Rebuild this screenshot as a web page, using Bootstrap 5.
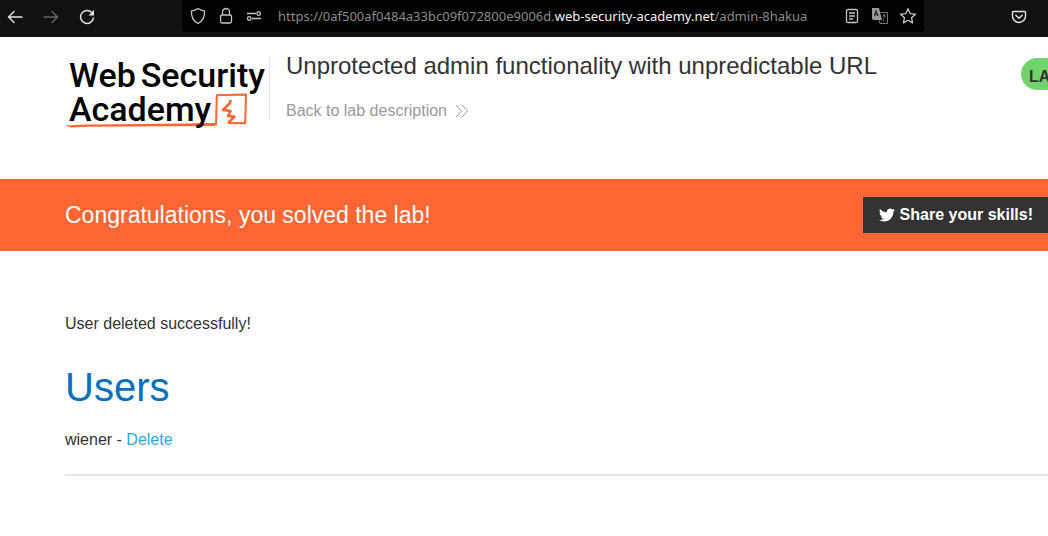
<!DOCTYPE html>
<html lang="en">
<head>
<meta charset="utf-8">
<meta name="viewport" content="width=device-width, initial-scale=1">
<title>Unprotected admin functionality with unpredictable URL</title>
<link href="https://cdn.jsdelivr.net/npm/bootstrap@5.3.0/dist/css/bootstrap.min.css" rel="stylesheet">
<style>
  body { font-family: "Liberation Sans", Arial, sans-serif; font-size: 16px; line-height: 24px; color: #333332; background: #fff; }
  .chrome-bar { height: 37px; background: #111; color: #e4e4e4; padding-left: 6px; }
  .chrome-bar svg, .site-header svg, .share-btn svg { display: block; fill: none; stroke: currentColor; flex: none; }
  .chrome-bar button { padding: 0; border: 0; background: none; color: inherit; }
  .chrome-bar .forward-btn { color: #666; }
  .nav-tools { flex: none; width: 176px; gap: 18px; height: 33px; }
  .address { min-width: 0; height: 32px; background: #000; border-radius: 0 0 4px 4px; padding: 0 7px 0 8px; gap: 10px; color: #c4c4c4; }
  .address-text { font: 13px/20px "Noto Sans", sans-serif; color: #8b8b8b; white-space: nowrap; padding-left: 6px; }
  .address-text b { font-weight: 400; color: #f4f4f4; }
  .chrome-end { flex: none; width: 124px; height: 33px; padding-right: 21px; }
  .page-inset { padding-left: 65px; }
  .site-header { height: 142px; padding-top: 21px; }
  .logo { flex: none; width: 205px; height: 62px; border-right: 1px solid #e4e4e4; color: #000; position: relative; }
  .logo-line { position: relative; z-index: 1; font: 500 34px/34px Roboto, sans-serif; white-space: nowrap; gap: 5px; padding-left: 4px; }
  .logo-art { position: absolute; left: 0; top: 34px; color: #ff6633; }
  .lab-title { padding-left: 16px; }
  .lab-title h2 { font-size: 24px; line-height: 28px; margin: -6px 0 19px; font-weight: 400; }
  .back-link { color: #999; gap: 8px; }
  .lab-pill { flex: none; width: 27px; height: 32px; background: #70d46c; font-weight: 700; line-height: 38px; padding-left: 8px; }
  .solved-band { height: 72px; background: #ff6633; color: #fff; }
  .solved-band h4 { font-size: 23px; line-height: 28px; font-weight: 400; }
  .share-btn { height: 36px; border: 0; background: #333332; color: #fff; font-weight: 700; padding: 0 15px 0 16px; gap: 5px; }
  .main-area { padding-top: 61px; }
  .users-title { font-size: 40px; line-height: 48px; font-weight: 400; color: #0071bd; margin: 27px 0 17px; }
  .delete-link { color: #29abe2; }
  .rule { height: 2px; background: #e4e4e4; border: 0; opacity: 1; margin: 22px 0 0; }
</style>
</head>
<body>
<nav class="chrome-bar d-flex align-items-start" aria-label="Browser">
  <div class="nav-tools d-flex align-items-center">
    <button type="button" aria-label="Back"><svg width="18" height="18" viewBox="0 0 18 18" stroke-width="1.4" stroke-linecap="round" stroke-linejoin="round"><path d="M16 9H2.500M8 3.500 2.500 9 8 14.500"/></svg></button>
    <button type="button" class="forward-btn" aria-label="Forward"><svg width="18" height="18" viewBox="0 0 18 18" stroke-width="1.400" stroke-linecap="round" stroke-linejoin="round"><path d="M2 9h13.500M10 3.500 15.500 9 10 14.500"/></svg></button>
    <button type="button" aria-label="Reload"><svg width="18" height="18" viewBox="0 0 18 18" stroke-width="1.500"><path d="M13.800 4.500A6.500 6.500 0 1 0 15.500 9.500"/><path d="M16 2v5.500h-5.500z" fill="currentColor" stroke="none"/></svg></button>
  </div>
  <div class="address d-flex align-items-center flex-grow-1">
    <svg width="16" height="18" viewBox="0 0 16 18" stroke-width="1.300" stroke-linejoin="round"><path d="M8 1.500C6 3 3.500 3.700 1.500 3.800c-.4 5.700 1.600 10.200 6.500 12.700 4.900-2.500 6.900-7 6.500-12.700C12.500 3.700 10 3 8 1.500z"/></svg>
    <svg width="20" height="18" viewBox="0 0 20 18" stroke-width="1.300"><rect x="4.500" y="8" width="11" height="8" rx="1.500"/><path d="M6.500 8V5a3.500 3.500 0 0 1 7 0v3"/></svg>
    <svg width="16" height="16" viewBox="0 0 16 16" stroke-width="1.300"><path d="M1 5.500h9M6 10.500h9"/><circle cx="12.700" cy="5.500" r="1.800"/><circle cx="3.300" cy="10.500" r="1.800"/></svg>
    <div class="address-text flex-grow-1">https://0af500af0484a33bc09f072800e9006d.<b>web-security-academy.net</b>/admin-8hakua</div>
    <button type="button" aria-label="Reader view"><svg width="18" height="18" viewBox="0 0 18 18" stroke-width="1.300"><rect x="3.500" y="2.500" width="11" height="13" rx="1.500"/><path d="M6 6h6M6 9h6M6 12h4"/></svg></button>
    <button type="button" aria-label="Translate"><svg width="18" height="18" viewBox="0 0 18 18"><path d="M1 1h7l3 12H2.500L1 11.500z" fill="#999" stroke="none"/><path d="M9.500 5.500h7v11H9L8 13" stroke="#777"/><path d="m3.500 9 1.500-5 2 5M4 7.500h2.500" stroke="#222" stroke-width="1.200"/><path d="M11.500 9q1.500-2 2.500-.5c.5 1.500-1.500 1.500-1.500 3M12.500 13v1" stroke="#aaa"/></svg></button>
    <button type="button" aria-label="Bookmark"><svg width="18" height="18" viewBox="0 0 18 18" stroke-width="1.300" stroke-linejoin="round"><path d="m9 1.800 2.200 4.800 5.200.6-3.900 3.500 1.100 5.200L9 13.300l-4.600 2.600 1.100-5.200-3.900-3.500 5.200-.6z"/></svg></button>
  </div>
  <div class="chrome-end d-flex align-items-center justify-content-end">
    <button type="button" aria-label="Save to Pocket"><svg width="16" height="16" viewBox="0 0 16 16" stroke-width="1.400" stroke-linecap="round" stroke-linejoin="round"><path d="M2.500 2.500h11c.7 0 1 .4 1 1V7a6.500 6.500 0 0 1-13 0V3.500c0-.6.3-1 1-1z"/><path d="m4.800 6.300 3.200 3 3.200-3"/></svg></button>
  </div>
</nav>

<header class="site-header page-inset d-flex align-items-start">
  <a href="#" class="logo text-decoration-none">
    <div class="logo-line d-flex"><span>Web</span><span>Security</span></div>
    <div class="logo-line">Academy</div>
    <svg class="logo-art" width="186" height="38" viewBox="0 0 186 38" stroke-linejoin="round" aria-hidden="true"><path d="M0 33.500 22 32.500 150 31.300V34L22 34.800l-16 .7z" fill="currentColor" stroke="none"/><path d="M128 32.500l23-.3.800-29L181 2.500l-.8 28.700-17-.2" stroke-width="2"/><path d="M165.500 8 165 11l-7 7 7.500 1-2.500 5 6.500.800-6.500 6.200" stroke-width="2.600"/></svg>
  </a>
  <div class="lab-title flex-grow-1">
    <h2>Unprotected admin functionality with unpredictable URL</h2>
    <a href="#" class="back-link d-inline-flex align-items-center text-decoration-none">Back to lab description <svg width="14" height="14" viewBox="0 0 14 14"><path d="m1 1 5.500 6L1 13M7 1l5.500 6L7 13"/></svg></a>
  </div>
  <div class="lab-pill rounded-start-pill">LA</div>
</header>

<section class="solved-band page-inset d-flex align-items-center justify-content-between">
  <h4 class="m-0">Congratulations, you solved the lab!</h4>
  <button type="button" class="share-btn d-flex align-items-center"><svg width="16" height="16" viewBox="0 0 24 24"><path fill="currentColor" stroke="none" d="M23.950 4.570a10 10 0 0 1-2.820.770 4.960 4.960 0 0 0 2.160-2.720c-.950.550-2 .950-3.120 1.180a4.920 4.920 0 0 0-8.380 4.480C7.690 8.100 4.070 6.130 1.640 3.160a4.900 4.900 0 0 0 1.520 6.570 4.900 4.900 0 0 1-2.230-.610v.060a4.920 4.920 0 0 0 3.950 4.830 5 5 0 0 1-2.210.080 4.940 4.940 0 0 0 4.600 3.420A9.870 9.870 0 0 1 0 19.540a14 14 0 0 0 7.550 2.210c9.050 0 14-7.500 14-13.980l-.020-.630a10 10 0 0 0 2.420-2.570z"/></svg>Share your skills!</button>
</section>

<main class="main-area page-inset">
  <p class="m-0">User deleted successfully!</p>
  <h1 class="users-title">Users</h1>
  <div><span>wiener - </span><a href="#" class="delete-link text-decoration-none">Delete</a></div>
  <hr class="rule">
</main>
<script src="https://cdn.jsdelivr.net/npm/bootstrap@5.3.0/dist/js/bootstrap.bundle.min.js"></script>
</body>
</html>
